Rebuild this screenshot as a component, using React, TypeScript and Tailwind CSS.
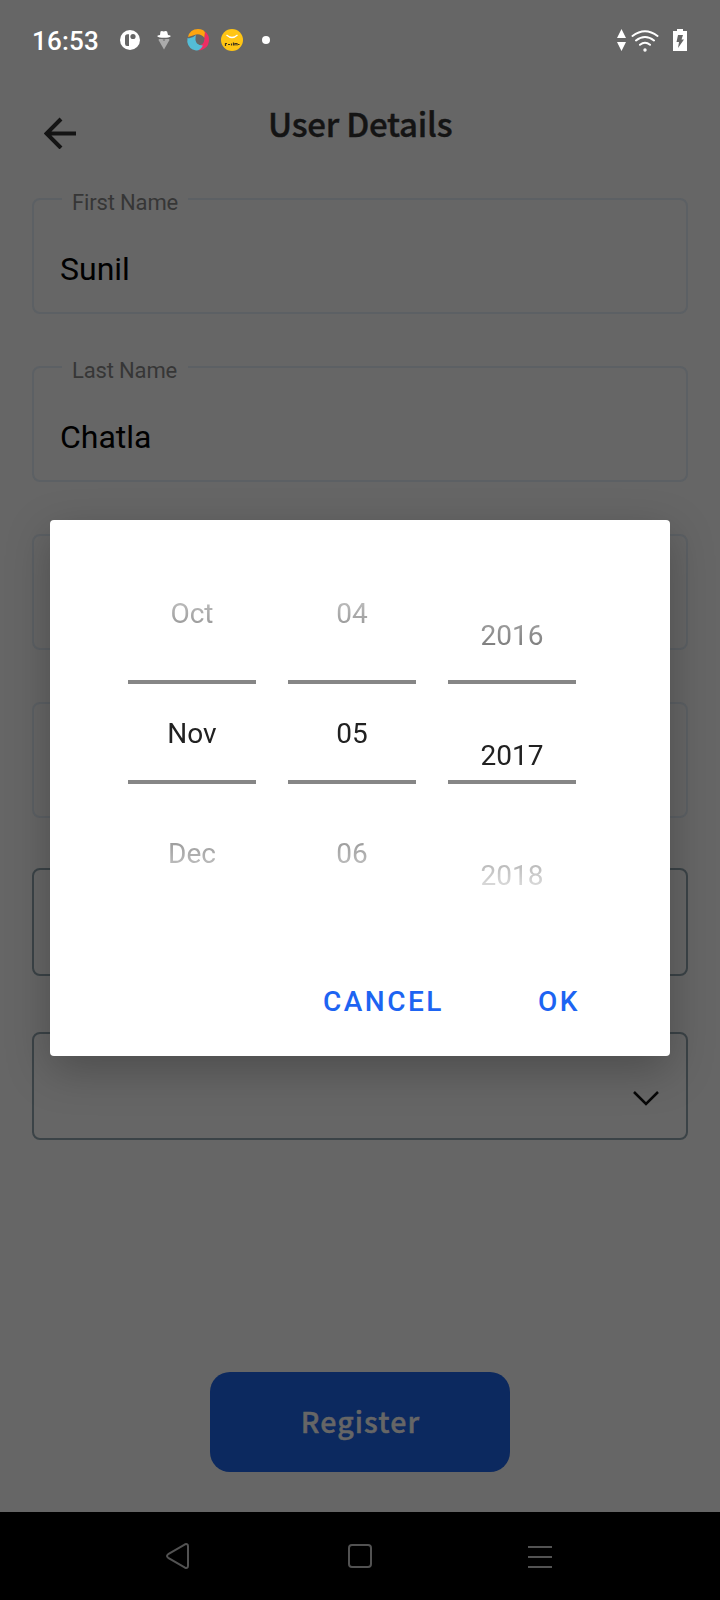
import React from "react";

const ROBOTO = "font-[Roboto,'Liberation_Sans',sans-serif]";
const TITLE = "font-['Noto_Sans_CJK_SC','Noto_Sans',sans-serif]";

function StatusBar() {
  return (
    <div className="flex h-20 shrink-0 items-center pl-8 pr-[33px] text-white">
      <span className={`${ROBOTO} w-[67px] pt-0.5 text-[26px] leading-8 font-medium tracking-[0.2px]`}>16:53</span>
      <svg className="ml-[21px] h-5 w-5" viewBox="0 0 20 20">
        <circle cx="10" cy="10" r="10" fill="#fff" />
        <path d="M9 4.200H7.600Q5 4.200 5 7v6.500q0 2.500 2 2.500h2z" fill="#666" />
        <circle cx="13" cy="6.500" r="2.600" fill="#666" />
      </svg>
      <svg className="ml-[16px] h-5 w-4" viewBox="0 0 16 20">
        <path d="M3 9h10l.5 1L8 19.500 2.500 10z" fill="#ababab" />
        <path d="M4.500 1.500q1.200-1 3.200 0 2-1 3.400 0L12 5q3 .5 2.800 1.200Q13 7.800 8 7.800T1.200 6.200Q1 5.500 4 5z" fill="#fff" />
        <path d="M6.500 9.500h3L8 11z" fill="#666" />
      </svg>
      <svg className="ml-[15px] h-[22px] w-[23px]" viewBox="0 0 23 22">
        <path d="M1 8Q3 0 11 0q6 0 7 3.500l-.5 5.500Q14 4.500 9 5.500 5 6.500 1 8z" fill="#fda50f" />
        <path d="M18 2.500q4.500 3.500 4 9.500-1 8-9.500 9.500l-2.500-5q7 .5 7.500-7z" fill="#ee2d63" />
        <path d="M.5 9Q5 10 9 6q-1.500 5 1 8.500 2 2 6 2Q13 22 9 21.500 1.500 20 .3 13z" fill="#54bdd7" />
      </svg>
      <svg className="ml-[11px] h-[22px] w-[22px]" viewBox="0 0 22 22">
        <circle cx="11" cy="11" r="11" fill="#ffc514" />
        <path d="M5.500 6q5.500 5 11 0" fill="none" stroke="#fff" strokeWidth="1.200" />
        <path d="M4.500 17v-2.500h1.500M7 15.500h2M10.500 14.500v2M12.500 13.500v3M14 16.500v-2h2v2M17 15.500h1.500" fill="none" stroke="#40351a" strokeWidth="1.200" />
      </svg>
      <span className="ml-[19px] h-2 w-2 rounded-full bg-white" />
      <div className="ml-auto flex items-center">
        <svg className="h-[22px] w-[9px]" viewBox="0 0 9 22">
          <path d="M4.500 0L9 9H0zM4.500 22L9 13H0z" fill="#fff" />
        </svg>
        <svg className="ml-[5px] h-[23px] w-[28px]" viewBox="0 0 28 23" fill="none" stroke="#fff" strokeWidth="2" strokeLinecap="round">
          <path d="M1.500 7Q14-2.500 26.500 7M5 11.500q9-7 18 0M9 15.800q5-4 10 0" />
          <circle cx="14" cy="21" r=".7" />
        </svg>
        <svg className="ml-[14px] h-[22px] w-[14px]" viewBox="0 0 14 22">
          <path d="M4 0h6v2h4v20H0V2h4z" fill="#fff" />
          <path d="M5 6h5L8.500 10.500H11L5 19l1-6H3.500z" fill="#666" />
        </svg>
      </div>
    </div>
  );
}

function TextField({ label, value }: { label?: string; value?: string }) {
  return (
    <div className="relative mb-[52px] h-[116px] shrink-0 rounded-lg border-2 border-[#5c6064]">
      {label && (
        <span className={`${ROBOTO} absolute -top-2.5 left-7 w-[126px] bg-[#666] pl-2.5 text-[22px] leading-[26px] tracking-[-0.15px] text-[#363636]`}>
          {label}
        </span>
      )}
      {value && (
        <div className={`${ROBOTO} pt-[50px] pl-[26px] text-[32px] leading-[38px] text-black`}>{value}</div>
      )}
    </div>
  );
}

function Column({ items, offset }: { items: string[]; offset?: boolean }) {
  return (
    <div className="relative h-[360px] w-32">
      <div className="h-[360px] overflow-hidden mask-[linear-gradient(to_bottom,transparent,black_96px,black_264px,transparent)]">
        <div className={offset ? "pt-[23px]" : "pt-px"}>
          {items.map((item, i) => (
            <div
              key={item}
              className={`${ROBOTO} flex h-[120px] items-center justify-center text-[28px] ${i === 1 ? "text-[#212121]" : "text-[#7a7a7a]"}`}
            >
              {item}
            </div>
          ))}
        </div>
      </div>
      <div className="absolute inset-x-0 top-[127px] h-[104px] border-y-4 border-[#868686]" />
    </div>
  );
}

function DateDialog() {
  return (
    <div className="absolute top-[520px] left-[50px] flex h-[536px] w-[620px] flex-col rounded bg-white shadow-[0_14px_44px_rgba(0,0,0,0.25)]">
      <div className="flex gap-8 pt-[33px] pl-[78px]">
        <Column items={["Oct", "Nov", "Dec"]} />
        <Column items={["04", "05", "06"]} />
        <Column items={["2016", "2017", "2018"]} offset />
      </div>
      <div className={`${ROBOTO} mt-[73px] flex text-[28px] leading-8 font-medium tracking-[2.5px] text-[#1d64f2]`}>
        <button className="ml-[273px] w-[215px] text-left">CANCEL</button>
        <button>OK</button>
      </div>
    </div>
  );
}

export default function App() {
  return (
    <div className="relative flex h-[1600px] w-[720px] flex-col overflow-hidden bg-[#666]">
      <StatusBar />
      <header className="flex h-[118px] shrink-0">
        <svg className="mt-[37px] ml-11 h-8 w-8" viewBox="0 0 32 32" fill="none" stroke="#141414" strokeWidth="4">
          <path d="M32 16.500H3M17 2L2.500 16.500 17 31" />
        </svg>
        <h1 className={`${TITLE} mt-[19px] ml-[192px] text-[33px] leading-[48px] font-medium tracking-[-0.25px] text-[#141414] [-webkit-text-stroke:0.4px_#141414]`}>User Details</h1>
      </header>
      <main className="flex flex-col px-8">
        <TextField label="First Name" value="Sunil" />
        <TextField label="Last Name" value="Chatla" />
        <TextField />
        <TextField />
        <div className="-mt-0.5 h-[108px] shrink-0 rounded-lg border-2 border-[#3b4347]" />
        <div className="mt-14 flex h-[108px] shrink-0 justify-end rounded-lg border-2 border-[#3b4347]">
          <svg className="mt-[56px] mr-[27px] h-4 w-[26px]" viewBox="0 0 26 16" fill="none" stroke="#080808" strokeWidth="2.500">
            <path d="M1 2l12 12L25 2" />
          </svg>
        </div>
      </main>
      <button className={`${TITLE} mx-auto mt-[232px] flex h-[100px] w-[300px] shrink-0 items-center justify-center rounded-[20px] bg-[#0c295f] pb-0.5 pl-px text-[28.5px] font-medium tracking-[1.1px] text-[#666] [-webkit-text-stroke:0.5px_#666]`}>
        Register
      </button>
      <nav className="mt-10 flex h-[88px] shrink-0 items-center bg-black text-[#525252]">
        <svg className="ml-[165px] h-7 w-[26px]" viewBox="0 0 26 28" fill="none" stroke="currentColor" strokeWidth="2">
          <path d="M3.200 12.200L20 2.300q3-1 3 2v19.400q0 3-3 2L3.200 15.800q-2.400-1.800 0-3.600z" />
        </svg>
        <span className="ml-[157px] h-6 w-6 rounded border-2 border-current" />
        <span className="ml-[156px] flex w-6 flex-col gap-2 pt-[2px]">
          <i className="h-0.5 bg-current" />
          <i className="h-0.5 bg-current" />
          <i className="h-0.5 bg-current" />
        </span>
      </nav>
      <DateDialog />
    </div>
  );
}
